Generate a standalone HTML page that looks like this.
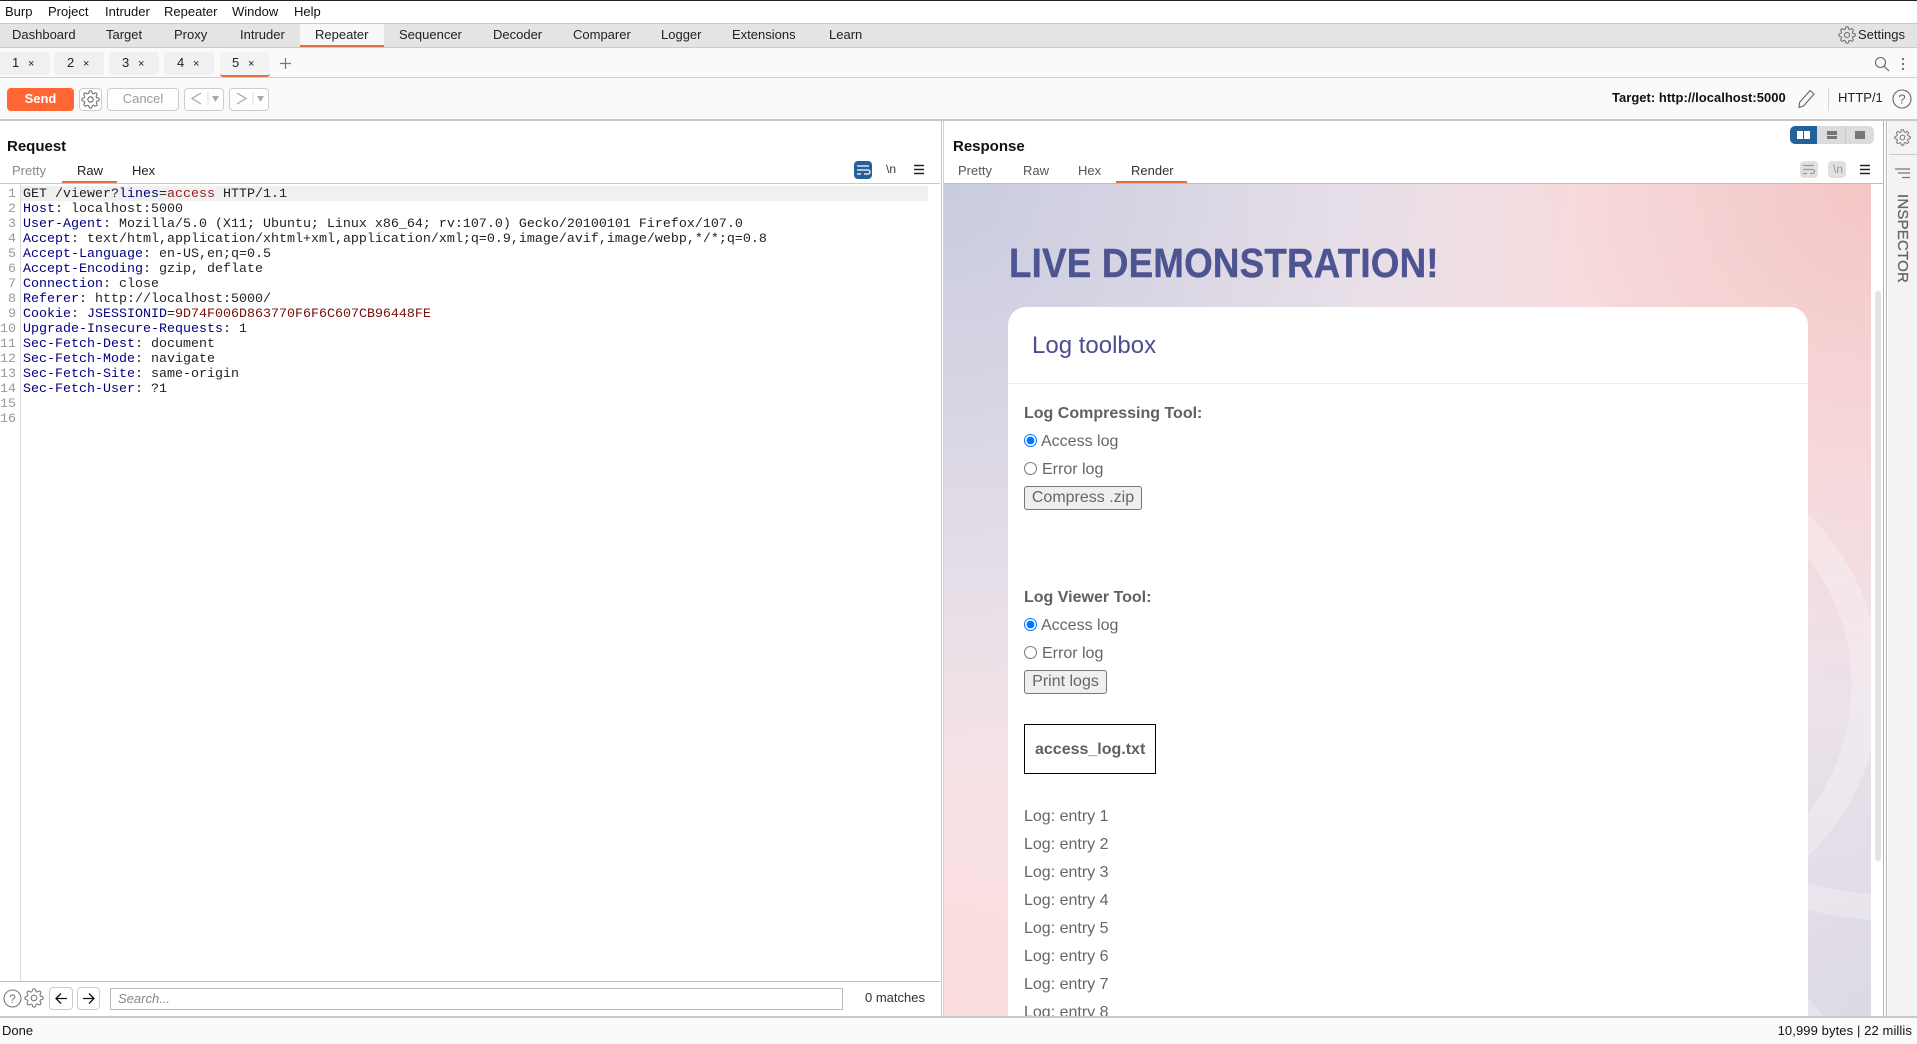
<!DOCTYPE html>
<html><head><meta charset="utf-8"><title>Burp Repeater</title>
<style>
html,body{margin:0;padding:0;width:1917px;height:1044px;overflow:hidden;background:#fff;font-family:"Liberation Sans",sans-serif;font-size:13px;color:#222}
.a{position:absolute;box-sizing:border-box}
.t{position:absolute;white-space:nowrap;line-height:20px;height:20px}
.m{font-family:"Liberation Mono",monospace;font-size:13.33px;color:#222;line-height:15px;height:15px;position:absolute;left:23px;white-space:pre}
.n{font-family:"Liberation Mono",monospace;font-size:13.33px;color:#999;line-height:15px;height:15px;position:absolute;left:0;width:16px;text-align:right}
.k{color:#000080}.v{color:#a02020}.c{color:#7a0c0c}
.tab{position:absolute;top:52px;height:23px;width:50px;background:#f0f0f0;border-radius:4px}
.btn{position:absolute;box-sizing:border-box;background:#fff;border:1px solid #ccc;border-radius:4px}
.p{position:absolute;white-space:nowrap;font-size:16px;line-height:22px;height:22px;color:#666}
.b{font-weight:bold;color:#5f6064}
.wb{position:absolute;box-sizing:border-box;background:#efefef;border:1px solid #767676;border-radius:3px;font-size:16px;color:#666;line-height:21px;white-space:nowrap;text-align:center}
input[type=radio]{position:absolute;margin:0;width:13px;height:13px}
svg{position:absolute;overflow:visible}
</style></head><body>
<svg width="0" height="0" style="position:absolute"><defs>
<symbol id="gear" viewBox="0 0 24 24"><circle cx="12" cy="12" r="3.4" fill="none" stroke="currentColor" stroke-width="1.3"/><path fill="none" stroke="currentColor" stroke-width="1.3" d="M19.4 15a1.65 1.65 0 0 0 .33 1.82l.06.06a2 2 0 0 1 0 2.83 2 2 0 0 1-2.83 0l-.06-.06a1.65 1.65 0 0 0-1.82-.33 1.65 1.65 0 0 0-1 1.51V21a2 2 0 0 1-2 2 2 2 0 0 1-2-2v-.09A1.65 1.65 0 0 0 9 19.4a1.65 1.65 0 0 0-1.82.33l-.06.06a2 2 0 0 1-2.83 0 2 2 0 0 1 0-2.83l.06-.06a1.65 1.65 0 0 0 .33-1.82 1.65 1.65 0 0 0-1.51-1H3a2 2 0 0 1-2-2 2 2 0 0 1 2-2h.09A1.65 1.65 0 0 0 4.6 9a1.65 1.65 0 0 0-.33-1.82l-.06-.06a2 2 0 0 1 0-2.83 2 2 0 0 1 2.83 0l.06.06a1.65 1.65 0 0 0 1.82.33H9a1.65 1.65 0 0 0 1-1.51V3a2 2 0 0 1 2-2 2 2 0 0 1 2 2v.09a1.65 1.65 0 0 0 1 1.51 1.65 1.65 0 0 0 1.82-.33l.06-.06a2 2 0 0 1 2.83 0 2 2 0 0 1 0 2.83l-.06.06a1.65 1.65 0 0 0-.33 1.82V9a1.65 1.65 0 0 0 1.51 1H21a2 2 0 0 1 2 2 2 2 0 0 1-2 2h-.09a1.65 1.65 0 0 0-1.51 1z"/></symbol>
</defs></svg>

<!-- top line + menu -->
<div class="a" style="left:0;top:0;width:1917px;height:1px;background:#222"></div>
<span class="t" style="left:5px;top:2px;color:#111">Burp</span>
<span class="t" style="left:48px;top:2px;color:#111">Project</span>
<span class="t" style="left:105px;top:2px;color:#111">Intruder</span>
<span class="t" style="left:164px;top:2px;color:#111">Repeater</span>
<span class="t" style="left:232px;top:2px;color:#111">Window</span>
<span class="t" style="left:294px;top:2px;color:#111">Help</span>

<!-- nav -->
<div class="a" style="left:0;top:23px;width:1917px;height:25px;background:#e4e4e4;border-top:1px solid #c9c9c9;border-bottom:1px solid #c9c9c9"></div>
<div class="a" style="left:300px;top:24px;width:84px;height:23px;background:#f7f7f7;border-bottom:2px solid #e0703f"></div>
<span class="t" style="left:12px;top:25px">Dashboard</span>
<span class="t" style="left:106px;top:25px">Target</span>
<span class="t" style="left:174px;top:25px">Proxy</span>
<span class="t" style="left:240px;top:25px">Intruder</span>
<span class="t" style="left:315px;top:25px">Repeater</span>
<span class="t" style="left:399px;top:25px">Sequencer</span>
<span class="t" style="left:493px;top:25px">Decoder</span>
<span class="t" style="left:573px;top:25px">Comparer</span>
<span class="t" style="left:661px;top:25px">Logger</span>
<span class="t" style="left:732px;top:25px">Extensions</span>
<span class="t" style="left:829px;top:25px">Learn</span>
<svg style="left:1838px;top:26px;color:#666" width="18" height="18"><use href="#gear"/></svg>
<span class="t" style="left:1858px;top:25px">Settings</span>

<!-- repeater tabs -->
<div class="a" style="left:0;top:48px;width:1917px;height:30px;background:#fafafa;border-bottom:1px solid #d0d0d0"></div>
<div class="tab" style="left:0"></div><div class="tab" style="left:54px"></div><div class="tab" style="left:109px"></div><div class="tab" style="left:164px"></div>
<div class="tab" style="left:220px;background:#f3f3f3;border-bottom:2px solid #e0703f;border-radius:4px 4px 3px 3px"></div>
<span class="t" style="left:12px;top:53px">1</span><span class="t" style="left:28px;top:54px;font-size:11px">×</span>
<span class="t" style="left:67px;top:53px">2</span><span class="t" style="left:83px;top:54px;font-size:11px">×</span>
<span class="t" style="left:122px;top:53px">3</span><span class="t" style="left:138px;top:54px;font-size:11px">×</span>
<span class="t" style="left:177px;top:53px">4</span><span class="t" style="left:193px;top:54px;font-size:11px">×</span>
<span class="t" style="left:232px;top:53px">5</span><span class="t" style="left:248px;top:54px;font-size:11px">×</span>
<svg style="left:279px;top:57px" width="13" height="13"><path d="M6.5 1v11M1 6.5h11" stroke="#777" stroke-width="1.2"/></svg>
<svg style="left:1874px;top:56px" width="16" height="16"><circle cx="6.5" cy="6.5" r="5" fill="none" stroke="#666" stroke-width="1.1"/><path d="M10 10l5 5" stroke="#666" stroke-width="1.2"/></svg>
<svg style="left:1901px;top:57px" width="4" height="14"><circle cx="2" cy="2" r="1.1" fill="#666"/><circle cx="2" cy="7" r="1.1" fill="#666"/><circle cx="2" cy="12" r="1.1" fill="#666"/></svg>

<!-- toolbar -->
<div class="a" style="left:0;top:78px;width:1917px;height:43px;background:#fafafa;border-bottom:2px solid #c8c8c8"></div>
<div class="a" style="left:7px;top:88px;width:67px;height:23px;background:#ff6633;border-radius:4px;color:#fff;font-weight:bold;text-align:center;line-height:21px">Send</div>
<div class="btn" style="left:79px;top:88px;width:23px;height:23px"></div>
<svg style="left:81px;top:90px;color:#666" width="19" height="19"><use href="#gear"/></svg>
<div class="btn" style="left:107px;top:88px;width:72px;height:23px;color:#999;text-align:center;line-height:20px">Cancel</div>
<div class="btn" style="left:184px;top:88px;width:40px;height:23px"></div>
<svg style="left:190px;top:91px" width="34" height="15"><path d="M11 2L2 7.5l9 5.5" fill="none" stroke="#aaa" stroke-width="1.3"/><path d="M18 1v13" stroke="#ddd"/><path d="M22 5h7l-3.500 6z" fill="#aaa"/></svg>
<div class="btn" style="left:229px;top:88px;width:40px;height:23px"></div>
<svg style="left:235px;top:91px" width="34" height="15"><path d="M2 2l9 5.500L2 13" fill="none" stroke="#aaa" stroke-width="1.3"/><path d="M18 1v13" stroke="#ddd"/><path d="M22 5h7l-3.500 6z" fill="#aaa"/></svg>
<span class="t" style="left:1612px;top:88px;font-weight:bold;color:#111;letter-spacing:.02px">Target: http://localhost:5000</span>
<svg style="left:1797px;top:89px" width="19" height="20"><path d="M13 1.500l4 3.500L6.500 17 2 18.500l.5-5z" fill="none" stroke="#666" stroke-width="1.1"/></svg>
<div class="a" style="left:1828px;top:88px;width:1px;height:23px;background:#d5d5d5"></div>
<span class="t" style="left:1838px;top:88px">HTTP/1</span>
<svg style="left:1892px;top:89px" width="20" height="20"><circle cx="10" cy="10" r="9" fill="none" stroke="#666" stroke-width="1.1"/><text x="10" y="14.500" text-anchor="middle" font-family="Liberation Sans" font-size="13" fill="#666">?</text></svg>

<!-- Request -->
<span class="t" style="left:7px;top:137px;font-size:15px;font-weight:bold;color:#111">Request</span>
<span class="t" style="left:12px;top:161px;color:#888">Pretty</span>
<span class="t" style="left:77px;top:161px">Raw</span>
<span class="t" style="left:132px;top:161px">Hex</span>
<div class="a" style="left:0;top:183px;width:940px;height:1px;background:#c9c9c9"></div>
<div class="a" style="left:62px;top:181px;width:55px;height:2px;background:#e0703f"></div>
<div class="a" style="left:854px;top:161px;width:18px;height:18px;background:#24619b;border-radius:4px"></div>
<svg style="left:856px;top:164px" width="14" height="12"><path d="M1 2h12M1 6h11a2 2 0 0 1 0 4H8M1 10h4" fill="none" stroke="#fff" stroke-width="1.300"/></svg>
<span class="t" style="left:886px;top:159px;font-size:12px;color:#333">\n</span>
<svg style="left:914px;top:164px" width="10" height="11"><path d="M0 1.500h10M0 5.500h10M0 9.500h10" stroke="#222" stroke-width="1.500"/></svg>

<!-- editor -->
<div class="a" style="left:20px;top:184px;width:1px;height:797px;background:#ddd"></div>
<div class="a" style="left:21px;top:186px;width:907px;height:15px;background:#f0f0f0"></div>
<span class="n" style="top:187px">1</span><span class="n" style="top:202px">2</span><span class="n" style="top:217px">3</span><span class="n" style="top:232px">4</span><span class="n" style="top:247px">5</span><span class="n" style="top:262px">6</span><span class="n" style="top:277px">7</span><span class="n" style="top:292px">8</span><span class="n" style="top:307px">9</span><span class="n" style="top:322px">10</span><span class="n" style="top:337px">11</span><span class="n" style="top:352px">12</span><span class="n" style="top:367px">13</span><span class="n" style="top:382px">14</span><span class="n" style="top:397px">15</span><span class="n" style="top:412px">16</span>
<span class="m" style="top:187px">GET /viewer?<span class="k">lines</span>=<span class="v">access</span> HTTP/1.1</span>
<span class="m" style="top:202px"><span class="k">Host</span>: localhost:5000</span>
<span class="m" style="top:217px"><span class="k">User-Agent</span>: Mozilla/5.0 (X11; Ubuntu; Linux x86_64; rv:107.0) Gecko/20100101 Firefox/107.0</span>
<span class="m" style="top:232px"><span class="k">Accept</span>: text/html,application/xhtml+xml,application/xml;q=0.9,image/avif,image/webp,*/*;q=0.8</span>
<span class="m" style="top:247px"><span class="k">Accept-Language</span>: en-US,en;q=0.5</span>
<span class="m" style="top:262px"><span class="k">Accept-Encoding</span>: gzip, deflate</span>
<span class="m" style="top:277px"><span class="k">Connection</span>: close</span>
<span class="m" style="top:292px"><span class="k">Referer</span>: http://localhost:5000/</span>
<span class="m" style="top:307px"><span class="k">Cookie</span>: <span class="k">JSESSIONID</span>=<span class="c">9D74F006D863770F6F6C607CB96448FE</span></span>
<span class="m" style="top:322px"><span class="k">Upgrade-Insecure-Requests</span>: 1</span>
<span class="m" style="top:337px"><span class="k">Sec-Fetch-Dest</span>: document</span>
<span class="m" style="top:352px"><span class="k">Sec-Fetch-Mode</span>: navigate</span>
<span class="m" style="top:367px"><span class="k">Sec-Fetch-Site</span>: same-origin</span>
<span class="m" style="top:382px"><span class="k">Sec-Fetch-User</span>: ?1</span>

<!-- search row -->
<div class="a" style="left:0;top:981px;width:940px;height:1px;background:#bdbdbd"></div>
<svg style="left:3px;top:989px" width="19" height="19"><circle cx="9.500" cy="9.500" r="8.500" fill="none" stroke="#777" stroke-width="1.100"/><text x="9.500" y="14" text-anchor="middle" font-family="Liberation Sans" font-size="12" fill="#777">?</text></svg>
<svg style="left:24px;top:988px;color:#777" width="20" height="20"><use href="#gear"/></svg>
<div class="btn" style="left:49px;top:987px;width:24px;height:23px"></div>
<svg style="left:54px;top:992px" width="14" height="13"><path d="M13 6.500H2M7 1.500l-5 5 5 5" fill="none" stroke="#111" stroke-width="1.300"/></svg>
<div class="btn" style="left:77px;top:987px;width:23px;height:23px"></div>
<svg style="left:82px;top:992px" width="14" height="13"><path d="M1 6.500h11M7 1.500l5 5-5 5" fill="none" stroke="#111" stroke-width="1.300"/></svg>
<div class="a" style="left:110px;top:988px;width:733px;height:22px;background:#fff;border:1px solid #bbb;color:#888;font-style:italic;line-height:20px;padding-left:7px">Search...</div>
<span class="t" style="left:865px;top:988px;color:#333">0 matches</span>

<!-- divider -->
<div class="a" style="left:941px;top:121px;width:1px;height:896px;background:#c8c8c8"></div>
<div class="a" style="left:943px;top:121px;width:1px;height:896px;background:#d4d4d4"></div>

<!-- Response -->
<span class="t" style="left:953px;top:137px;font-size:15px;font-weight:bold;color:#111">Response</span>
<span class="t" style="left:958px;top:161px;color:#555">Pretty</span>
<span class="t" style="left:1023px;top:161px;color:#555">Raw</span>
<span class="t" style="left:1078px;top:161px;color:#555">Hex</span>
<span class="t" style="left:1131px;top:161px;color:#333">Render</span>
<div class="a" style="left:944px;top:183px;width:939px;height:1px;background:#bdbdbd"></div>
<div class="a" style="left:1116px;top:181px;width:71px;height:2px;background:#e0703f"></div>

<!-- view toggle -->
<div class="a" style="left:1790px;top:126px;width:84px;height:18px;background:#dcdcdc;border-radius:5px"></div>
<div class="a" style="left:1790px;top:126px;width:27px;height:18px;background:#24619b;border-radius:5px 0 0 5px"></div>
<div class="a" style="left:1845px;top:126px;width:1px;height:18px;background:#c8c8c8"></div>
<div class="a" style="left:1797px;top:131px;width:6px;height:8px;background:#fff"></div>
<div class="a" style="left:1804px;top:131px;width:6px;height:8px;background:#fff"></div>
<div class="a" style="left:1827px;top:131px;width:10px;height:3.500px;background:#777"></div>
<div class="a" style="left:1827px;top:135.500px;width:10px;height:3.500px;background:#777"></div>
<div class="a" style="left:1855px;top:131px;width:10px;height:8px;background:#777"></div>

<!-- response icons -->
<div class="a" style="left:1800px;top:161px;width:18px;height:17px;background:#e0e0e0;border-radius:4px"></div>
<svg style="left:1803px;top:164px" width="12" height="11"><path d="M0 1.500h11M0 5.500h9.500a1.800 1.800 0 0 1 0 4H7M0 9.500h4" fill="none" stroke="#999" stroke-width="1.200"/></svg>
<div class="a" style="left:1828px;top:161px;width:18px;height:17px;background:#e0e0e0;border-radius:4px"></div>
<span class="t" style="left:1833px;top:159px;font-size:12px;color:#999">\n</span>
<svg style="left:1860px;top:164px" width="10" height="11"><path d="M0 1.500h10M0 5.500h10M0 9.500h10" stroke="#222" stroke-width="1.500"/></svg>

<!-- rendered page -->
<div class="a" style="left:944px;top:184px;width:927px;height:832px;overflow:hidden;background:radial-gradient(circle 620px at 0 0,#c8cbdf 0,rgba(200,203,223,0) 100%),radial-gradient(circle 520px at 100% 0,#f5c6c6 0,rgba(245,198,198,0) 100%),radial-gradient(circle 560px at 100% 100%,#dcd9e6 0,rgba(220,217,230,0) 100%),radial-gradient(circle 420px at 0 100%,#fbdcdd 0,rgba(251,220,221,0) 100%),#f6e8ec">
 <div class="a" style="left:-944px;top:-184px;width:1917px;height:1044px">
  <svg style="left:0;top:0" width="1917" height="1044"><circle cx="1642" cy="685" r="224" fill="none" stroke="#fff" stroke-opacity=".27" stroke-width="29"/><path d="M1790 893Q1840 905 1880 908" fill="none" stroke="#fff" stroke-opacity=".27" stroke-width="26"/><path d="M1800 990L1830 1022L1800 1022z" fill="#fff" fill-opacity=".25"/></svg>
  <div class="a" style="left:1009px;top:240px;font-size:41px;line-height:46px;font-weight:bold;color:#4d5492;white-space:nowrap;letter-spacing:.2px;transform:scaleX(.897);transform-origin:0 0;-webkit-text-stroke:.4px #4d5492">LIVE DEMONSTRATION!</div>
  <div class="a" style="left:1008px;top:307px;width:800px;height:709px;background:#fff;border-radius:18px 18px 0 0"></div>
  <div class="a" style="left:1008px;top:383px;width:800px;height:1px;background:#ececec"></div>
  <div class="a" style="left:1032px;top:331px;font-size:24px;line-height:30px;color:#4a4e8f;white-space:nowrap">Log toolbox</div>
  <span class="p b" style="left:1024px;top:403px">Log Compressing Tool:</span>
  <input type="radio" checked style="left:1024px;top:434px"><span class="p" style="left:1041px;top:431px">Access log</span>
  <input type="radio" style="left:1024px;top:462px"><span class="p" style="left:1042px;top:459px">Error log</span>
  <div class="wb" style="left:1024px;top:486px;width:118px;height:24px">Compress .zip</div>
  <span class="p b" style="left:1024px;top:587px">Log Viewer Tool:</span>
  <input type="radio" checked style="left:1024px;top:618px"><span class="p" style="left:1041px;top:615px">Access log</span>
  <input type="radio" style="left:1024px;top:646px"><span class="p" style="left:1042px;top:643px">Error log</span>
  <div class="wb" style="left:1024px;top:670px;width:83px;height:24px">Print logs</div>
  <div class="a" style="left:1024px;top:724px;width:132px;height:50px;border:1.500px solid #000"></div>
  <span class="p b" style="left:1035px;top:739px">access_log.txt</span>
  <span class="p" style="left:1024px;top:806px">Log: entry 1</span>
  <span class="p" style="left:1024px;top:834px">Log: entry 2</span>
  <span class="p" style="left:1024px;top:862px">Log: entry 3</span>
  <span class="p" style="left:1024px;top:890px">Log: entry 4</span>
  <span class="p" style="left:1024px;top:918px">Log: entry 5</span>
  <span class="p" style="left:1024px;top:946px">Log: entry 6</span>
  <span class="p" style="left:1024px;top:974px">Log: entry 7</span>
  <span class="p" style="left:1024px;top:1002px;height:14px;overflow:hidden">Log: entry 8</span>
 </div>
</div>
<div class="a" style="left:1875px;top:291px;width:6px;height:570px;background:#e4e4e4;border-radius:3px"></div>
<div class="a" style="left:1883px;top:121px;width:1px;height:895px;background:#b5b5b5"></div>
<div class="a" style="left:1886px;top:121px;width:1px;height:895px;background:#b5b5b5"></div>

<!-- inspector -->
<div class="a" style="left:1888px;top:121px;width:29px;height:895px;background:#f4f2f2"></div>
<svg style="left:1894px;top:129px;color:#666" width="17" height="17"><use href="#gear"/></svg>
<div class="a" style="left:1889px;top:154px;width:28px;height:1px;background:#c9c9c9"></div>
<svg style="left:1895px;top:168px" width="16" height="11"><path d="M0 1h15M3 5h12M7 9.500h8" stroke="#777" stroke-width="1.300"/></svg>
<div class="a" style="left:1894px;top:194px;font-size:15px;letter-spacing:.2px;color:#666;writing-mode:vertical-rl;white-space:nowrap;line-height:17px;-webkit-text-stroke:.3px #666">INSPECTOR</div>

<!-- status -->
<div class="a" style="left:0;top:1016px;width:1917px;height:28px;background:#fafafa;border-top:2px solid #c8c8c8"></div>
<span class="t" style="left:2px;top:1021px;color:#111">Done</span>
<span class="t" style="right:5px;top:1021px;color:#111;letter-spacing:.1px">10,999 bytes | 22 millis</span>
</body></html>
